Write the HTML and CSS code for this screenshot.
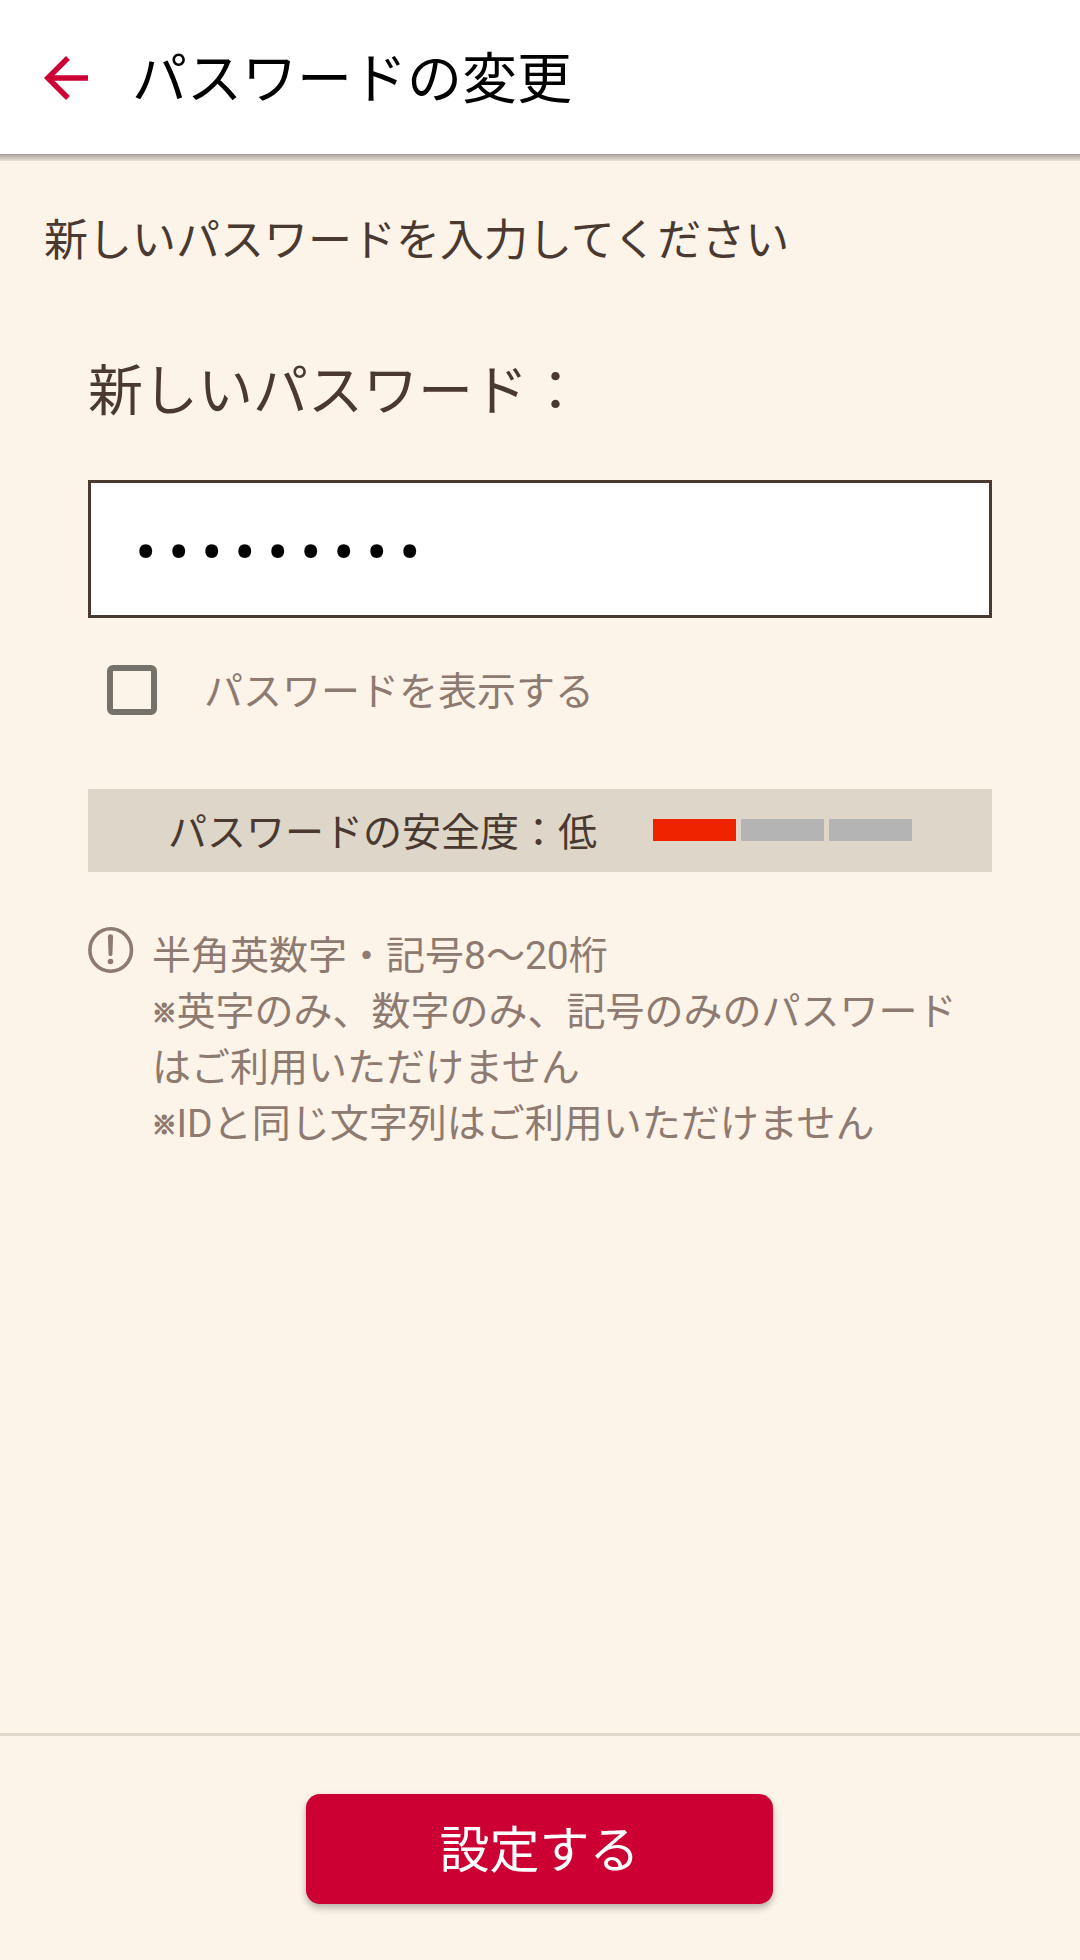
FILE: index.html
```html
<!DOCTYPE html>
<html lang="ja">
<head>
<meta charset="utf-8">
<title>パスワードの変更</title>
<link rel="stylesheet" href="styles.css">
</head>
<body>
<div class="screen">
  <header class="app-bar">
    <svg class="back" viewBox="0 0 24 24"><path d="M20 11H7.83l5.59-5.59L12 4l-8 8 8 8 1.41-1.41L7.83 13H20v-2z"/></svg>
    <h1 class="title">パスワードの変更</h1>
  </header>
  <div class="bar-shadow"></div>
  <main class="content">
    <p class="lead">新しいパスワードを入力してください</p>
    <section class="form">
      <label class="field-label" for="password">新しいパスワード：</label>
      <input class="field" id="password" type="password" value="abcdefghi">
      <label class="toggle"><input class="checkbox" type="checkbox"><span class="toggle-text">パスワードを表示する</span></label>
      <div class="strength">
        <span class="strength-text">パスワードの安全度：低</span>
        <div class="meter"><i class="step step-on"></i><i class="step"></i><i class="step"></i></div>
      </div>
      <div class="notes">
        <svg class="notice" viewBox="0 0 46 48"><ellipse cx="22.7" cy="24" rx="20.8" ry="21.2"/><path d="M19.9 10.5q0-2.2 2.6-2.2t2.6 2.2l-.7 18q-.2 1.6-1.9 1.6t-1.9-1.6z"/><circle cx="22.5" cy="35.5" r="2.8"/></svg>
        <div class="notes-text">
          <p>半角英数字・記号8〜20桁</p>
          <p><span class="mark">※</span>英字のみ、数字のみ、記号のみのパスワードはご利用いただけません</p>
          <p><span class="mark">※</span>IDと同じ文字列はご利用いただけません</p>
        </div>
      </div>
    </section>
  </main>
  <footer class="footer"><button class="submit">設定する</button></footer>
</div>
</body>
</html>
```

FILE: styles.css
```css
* { box-sizing: border-box; margin: 0; padding: 0; }
body {
  background: #fcf3e9;
  color: #493930;
  font-family: "Noto Sans CJK JP", sans-serif;
}
.screen { display: flex; flex-direction: column; width: 1080px; height: 1960px; }
.app-bar {
  display: flex;
  align-items: center;
  height: 154px;
  padding: 0 33px;
  gap: 33px;
  background: #fff;
}
.bar-shadow { height: 7px; background: linear-gradient(#9b9690, #b5afa8 20%, #e8e0d7); }
.back { width: 66px; height: 66px; margin-top: 2px; fill: #cc0033; }
.title { font-size: 55px; font-weight: 400; line-height: 80px; color: #000; margin-bottom: 6px; }
.content { flex: 1; padding: 44px 44px 0; }
.lead { font-size: 44px; line-height: 64px; }
.form { display: flex; flex-direction: column; padding: 77px 44px 0; }
.field-label { font-size: 55px; line-height: 80px; }
.field {
  height: 138px;
  margin-top: 54px;
  padding: 8px 40px 0 44px;
  border: 3px solid #493930;
  border-radius: 0;
  outline: none;
  background: #fff;
  color: #000;
  font: 64px/80px Roboto, sans-serif;
  letter-spacing: 11.4px;
}
.toggle {
  display: flex;
  align-items: center;
  gap: 47px;
  height: 56px;
  margin-top: 44px;
  padding-left: 19px;
  font-size: 39px;
  line-height: 56px;
  color: #8d7a70;
}
.toggle-text { margin-bottom: 5px; }
.checkbox {
  appearance: none;
  width: 50px;
  height: 50px;
  border: 6px solid #75726b;
  border-radius: 6px;
}
.strength {
  display: flex;
  align-items: center;
  justify-content: space-between;
  height: 83px;
  margin-top: 71px;
  padding: 0 80px;
  background: #ded6c9;
}
.strength-text { font-size: 39px; line-height: 78px; margin-bottom: 4px; }
.meter { display: flex; gap: 5px; margin-bottom: 1px; }
.step { width: 83px; height: 22px; background: #b4b4b4; }
.step-on { background: #f02300; }
.notes { display: flex; gap: 18px; margin-top: 54px; color: #8d7a70; }
.notice { flex: none; width: 46px; height: 48px; fill: #8d7a70; }
.notice ellipse { fill: none; stroke: #8d7a70; stroke-width: 3.6; }
.notes-text {
  margin-top: 2px;
  font: 39px/56px Roboto, "Noto Sans CJK JP", sans-serif;
}
.mark {
  font-size: 24.5px;
  line-height: 1;
  vertical-align: 3px;
  -webkit-text-stroke: 1.5px #8d7a70;
}
.footer {
  display: flex;
  justify-content: center;
  height: 227px;
  padding-top: 58px;
  padding-right: 1px;
  border-top: 3px solid #e0d8ca;
}
.submit {
  width: 467px;
  height: 110px;
  padding-bottom: 6px;
  border: 0;
  border-radius: 14px;
  background: #cc0033;
  color: #fff;
  font: 50px/72px "Noto Sans CJK JP", sans-serif;
  box-shadow: 0 4px 7px rgba(0, 0, 0, .27);
}
```
